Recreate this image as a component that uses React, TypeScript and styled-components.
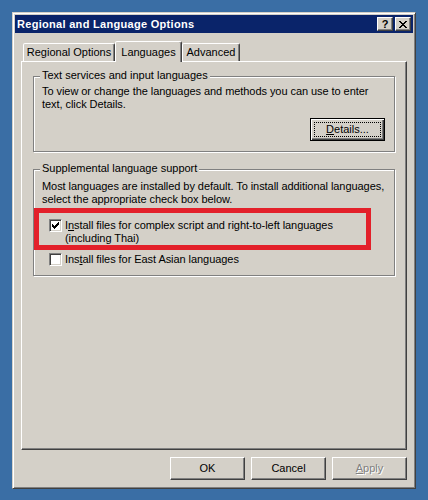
import React from "react";
import styled, { createGlobalStyle } from "styled-components";

const GlobalStyle = createGlobalStyle`
  html, body {
    margin: 0;
    padding: 0;
  }
  body {
    background: #3a6ea5;
    font-family: "Liberation Sans", Arial, sans-serif;
    font-size: 11px;
    color: #000;
  }
`;

const Desktop = styled.div`
  width: 428px;
  height: 500px;
  padding: 12px 0 0 12px;
  box-sizing: border-box;
`;

const Window = styled.div`
  width: 404px;
  height: 477px;
  box-sizing: border-box;
  background: #d4d0c8;
  border: 1px solid;
  border-color: #d4d0c8 #404040 #404040 #d4d0c8;
  box-shadow: inset 1px 1px 0 #fff, inset -1px -1px 0 #808080;
  padding: 2px;
  display: flex;
  flex-direction: column;
`;

const TitleBar = styled.div`
  height: 18px;
  flex: none;
  display: flex;
  align-items: center;
  padding: 0 2px;
  background: #0a246a;
  color: #fff;
  font-weight: bold;
  letter-spacing: 0.3px;
  line-height: 13px;
`;

const CaptionButtons = styled.div`
  margin-left: auto;
  display: flex;
  gap: 2px;
`;

const CaptionButton = styled.div`
  width: 16px;
  height: 14px;
  box-sizing: border-box;
  background: #d4d0c8;
  border: 1px solid;
  border-color: #fff #404040 #404040 #fff;
  box-shadow: inset -1px -1px 0 #808080;
  display: flex;
  align-items: center;
  justify-content: center;
  color: #000;
  font-size: 11px;
  font-weight: bold;
  letter-spacing: 0;
  line-height: 1;
`;

const Body = styled.div`
  flex: 1;
  display: flex;
  flex-direction: column;
  padding: 8px 6px 6px;
`;

const TabStrip = styled.div`
  height: 20px;
  display: flex;
  align-items: flex-end;
  padding-left: 2px;
`;

const Tab = styled.div<{ $active?: boolean; $w: number }>`
  position: relative;
  width: ${({ $w }) => $w}px;
  height: ${({ $active }) => ($active ? 21 : 18)}px;
  margin-bottom: ${({ $active }) => ($active ? -1 : 0)}px;
  z-index: ${({ $active }) => ($active ? 1 : 0)};
  box-sizing: border-box;
  background: #d4d0c8;
  border: 1px solid;
  border-bottom: none;
  border-color: #fff #404040 transparent #fff;
  border-radius: 2px 2px 0 0;
  box-shadow: inset -1px 0 0 #808080;
  display: flex;
  align-items: center;
  justify-content: center;
  line-height: 13px;
  white-space: nowrap;
`;

const Panel = styled.div`
  height: 389px;
  box-sizing: border-box;
  border: 1px solid;
  border-color: #fff #404040 #404040 #fff;
  box-shadow: inset -1px -1px 0 #808080;
  padding: 14px 0 0 11px;
`;

const Group = styled.div<{ $mt: number; $pt: number; $pb: number }>`
  position: relative;
  width: 362px;
  box-sizing: border-box;
  margin-top: ${({ $mt }) => $mt}px;
  border: 1px solid #808080;
  box-shadow: inset 1px 1px 0 #fff, 1px 1px 0 #fff;
  padding: ${({ $pt }) => $pt}px 9px ${({ $pb }) => $pb}px 8px;
`;

const Legend = styled.span`
  position: absolute;
  top: -8px;
  left: 6px;
  padding: 0 2px;
  background: #d4d0c8;
  line-height: 13px;
  white-space: nowrap;
`;

const Text = styled.div`
  line-height: 13px;
  white-space: nowrap;
  letter-spacing: -0.06px;
`;

const GroupActions = styled.div`
  display: flex;
  justify-content: flex-end;
  margin-top: 7px;
`;

const Button = styled.div<{ $default?: boolean; $disabled?: boolean }>`
  width: 75px;
  height: 23px;
  box-sizing: border-box;
  background: #d4d0c8;
  display: flex;
  align-items: center;
  justify-content: center;
  line-height: 13px;
  border: 1px solid;
  border-color: ${({ $default }) =>
    $default ? "#000" : "#fff #404040 #404040 #fff"};
  box-shadow: ${({ $default }) =>
    $default
      ? "inset 1px 1px 0 #fff, inset -1px -1px 0 #404040, inset -2px -2px 0 #808080"
      : "inset -1px -1px 0 #808080"};
  padding: ${({ $default }) => ($default ? "3px" : "0")};
  color: ${({ $disabled }) => ($disabled ? "#808080" : "#000")};
  text-shadow: ${({ $disabled }) => ($disabled ? "1px 1px 0 #fff" : "none")};
`;

const FocusRing = styled.span`
  flex: 1;
  align-self: stretch;
  display: flex;
  align-items: center;
  justify-content: center;
  border: 1px dotted #000;
`;

const Highlight = styled.div`
  width: 337px;
  box-sizing: border-box;
  margin: 2px 0 0 -8px;
  border: 5px solid #e3202a;
  padding: 6px 0 0 10px;
`;

const CheckRow = styled.div<{ $indent?: number; $mt?: number }>`
  display: flex;
  align-items: flex-start;
  gap: 3px;
  line-height: 13px;
  white-space: nowrap;
  letter-spacing: -0.06px;
  margin-left: ${({ $indent = 0 }) => $indent}px;
  margin-top: ${({ $mt = 0 }) => $mt}px;
`;

const CheckBox = styled.div`
  width: 13px;
  height: 13px;
  flex: none;
  box-sizing: border-box;
  background: #fff;
  border: 1px solid;
  border-color: #808080 #fff #fff #808080;
  box-shadow: inset 1px 1px 0 #404040, inset -1px -1px 0 #d4d0c8;
  display: flex;
  align-items: center;
  justify-content: center;
`;

const Footer = styled.div`
  display: flex;
  justify-content: flex-end;
  gap: 6px;
  margin-top: 7px;
`;

const Check = () => (
  <svg width="7" height="7" viewBox="0 0 7 7" shapeRendering="crispEdges">
    <path d="M0 2h1v1h1v1h1V3h1V2h1V1h1V0h1v3h-1v1h-1v1h-1v1h-1v1H2V6H1V5H0z" fill="#000" />
  </svg>
);

const CloseGlyph = () => (
  <svg width="8" height="7" viewBox="0 0 8 7" shapeRendering="crispEdges">
    <path d="M0 0h2v1h1v1h2V1h1V0h2v1H7v1H6v1H5v1h1v1h1v1h1v1H6V6H5V5H3v1H2v1H0V6h1V5h1V4h1V3H2V2H1V1H0z" fill="#000" />
  </svg>
);

export default function App() {
  return (
    <>
      <GlobalStyle />
      <Desktop>
        <Window>
          <TitleBar>
            Regional and Language Options
            <CaptionButtons>
              <CaptionButton>?</CaptionButton>
              <CaptionButton>
                <CloseGlyph />
              </CaptionButton>
            </CaptionButtons>
          </TitleBar>
          <Body>
            <TabStrip>
              <Tab $w={92}>Regional Options</Tab>
              <Tab $w={67} $active>Languages</Tab>
              <Tab $w={58}>Advanced</Tab>
            </TabStrip>
            <Panel>
              <Group $mt={0} $pt={8} $pb={10}>
                <Legend>Text services and input languages</Legend>
                <Text>
                  To view or change the languages and methods you can use to enter
                  <br />
                  text, click Details.
                </Text>
                <GroupActions>
                  <Button $default>
                    <FocusRing>
                      <span>
                        <u>D</u>etails...
                      </span>
                    </FocusRing>
                  </Button>
                </GroupActions>
              </Group>
              <Group $mt={17} $pt={10} $pb={9}>
                <Legend>Supplemental language support</Legend>
                <Text>
                  Most languages are installed by default. To install additional languages,
                  <br />
                  select the appropriate check box below.
                </Text>
                <Highlight>
                  <CheckRow>
                    <CheckBox>
                      <Check />
                    </CheckBox>
                    <span>
                      I<u>n</u>stall files for complex script and right-to-left languages
                      <br />
                      (including Thai)
                    </span>
                  </CheckRow>
                </Highlight>
                <CheckRow $indent={7} $mt={3}>
                  <CheckBox />
                  <span>
                    Ins<u>t</u>all files for East Asian languages
                  </span>
                </CheckRow>
              </Group>
            </Panel>
            <Footer>
              <Button>OK</Button>
              <Button>Cancel</Button>
              <Button $disabled>
                <span>
                  <u>A</u>pply
                </span>
              </Button>
            </Footer>
          </Body>
        </Window>
      </Desktop>
    </>
  );
}
